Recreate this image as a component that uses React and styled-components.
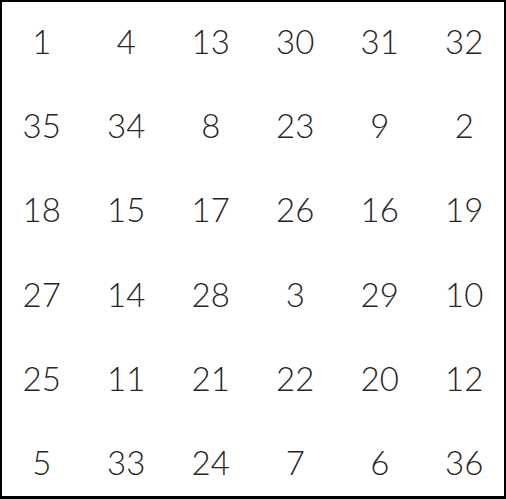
import React from "react";
import styled, { createGlobalStyle } from "styled-components";

const GlobalStyle = createGlobalStyle`
  html, body {
    margin: 0;
    padding: 0;
    background: #ffffff;
  }
`;

const Frame = styled.div`
  box-sizing: border-box;
  width: 506px;
  height: 499px;
  border: 2px solid #000;
  border-bottom-width: 3px;
  background: #fff;
  display: grid;
  grid-template-columns: repeat(6, 84.5px);
  grid-auto-rows: 84.2px;
  justify-content: center;
  align-content: start;
`;

const Cell = styled.div`
  display: flex;
  align-items: center;
  justify-content: center;
  padding-bottom: 6px;
  font-family: Lato, "Liberation Sans", sans-serif;
  font-weight: 300;
  font-size: 33px;
  color: #262626;
`;

const numbers = [
  [1, 4, 13, 30, 31, 32],
  [35, 34, 8, 23, 9, 2],
  [18, 15, 17, 26, 16, 19],
  [27, 14, 28, 3, 29, 10],
  [25, 11, 21, 22, 20, 12],
  [5, 33, 24, 7, 6, 36],
];

export default function App() {
  return (
    <>
      <GlobalStyle />
      <Frame>
        {numbers.flat().map((n, i) => (
          <Cell key={i}>{n}</Cell>
        ))}
      </Frame>
    </>
  );
}
